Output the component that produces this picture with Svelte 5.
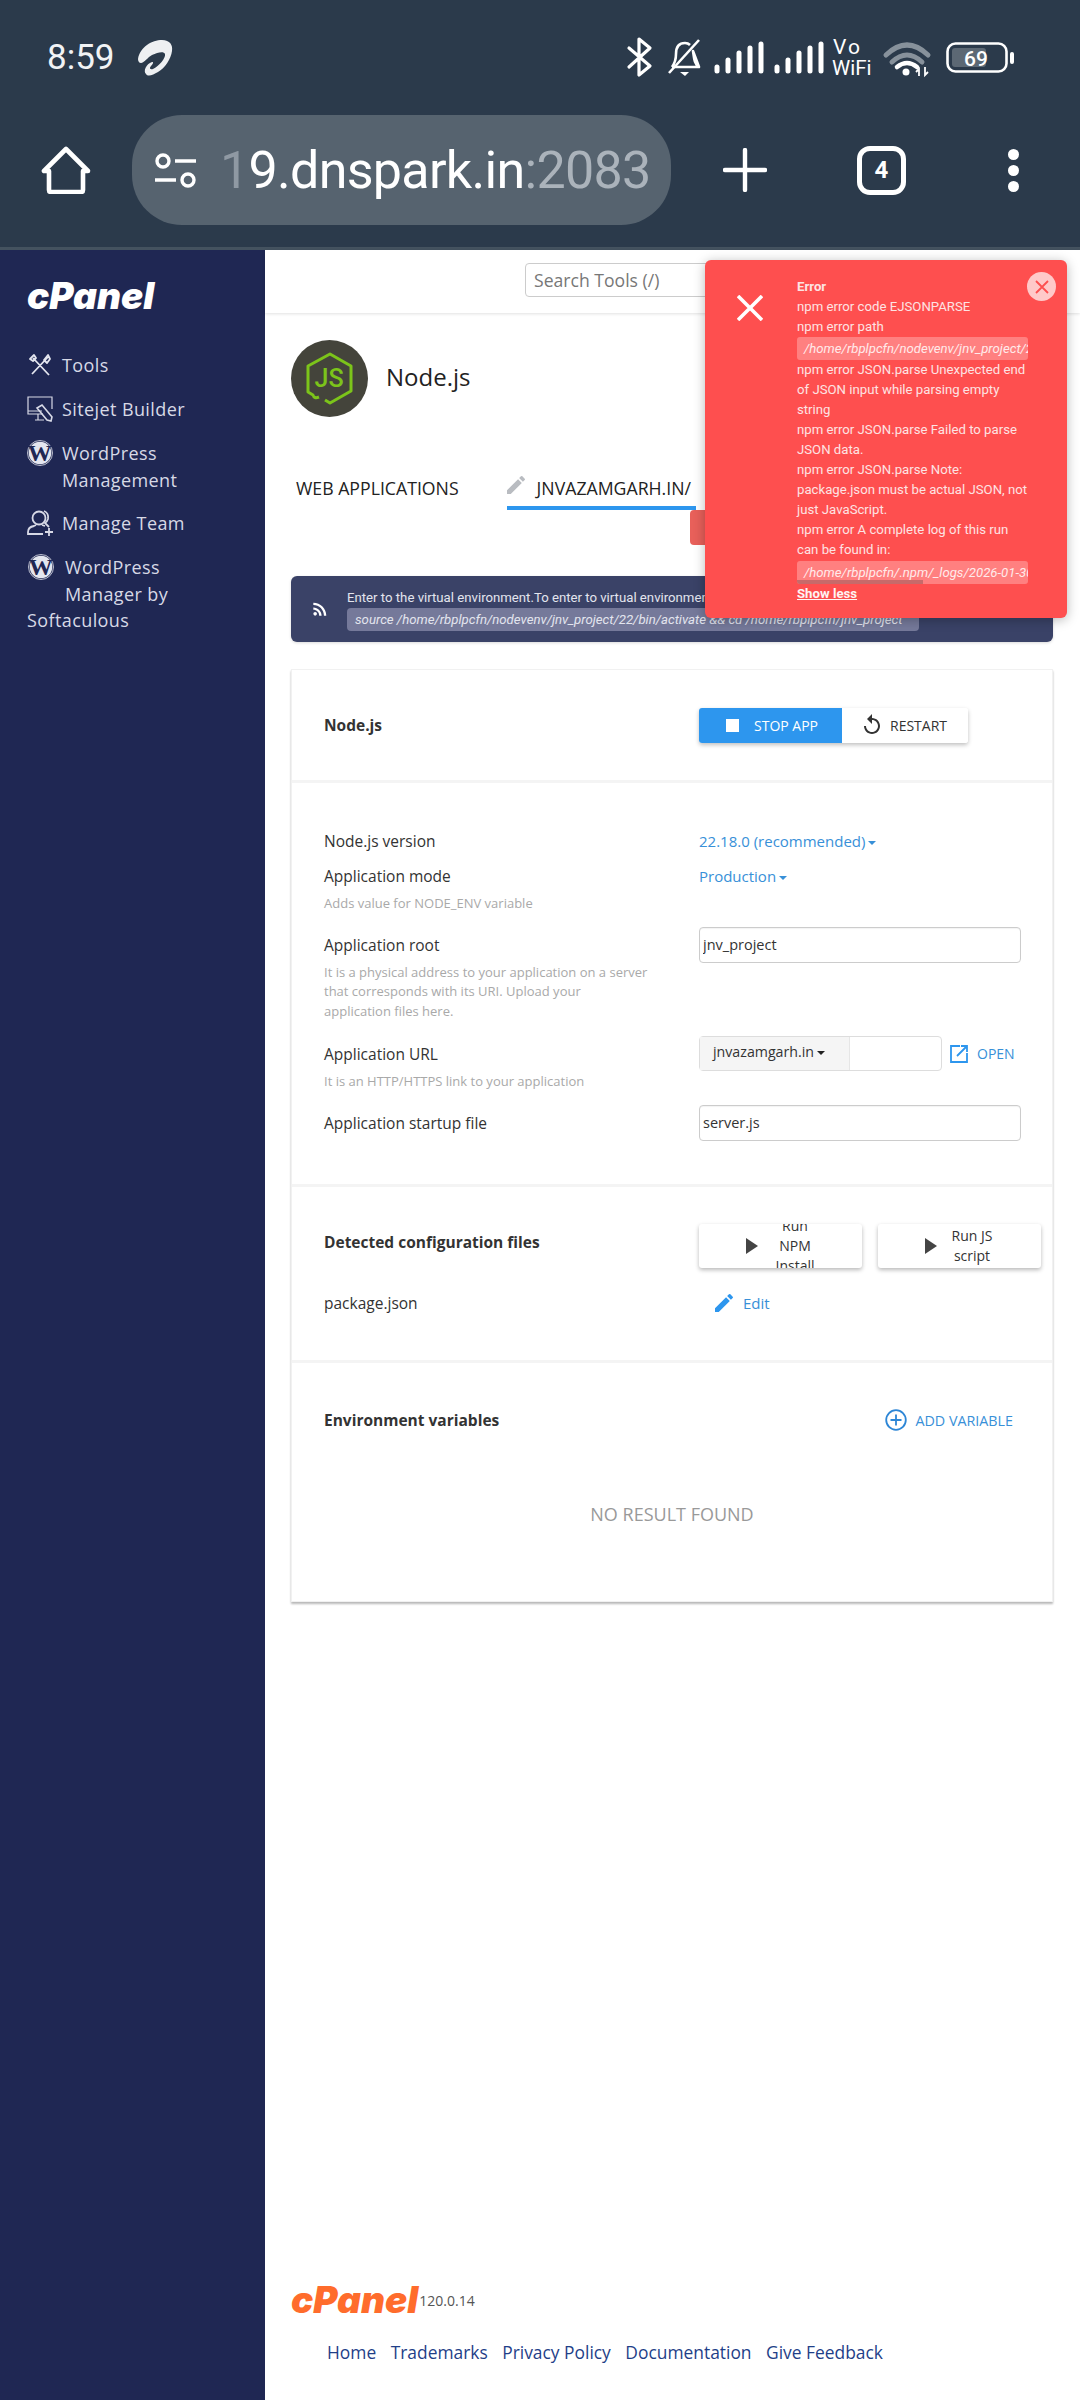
<script>
  const bars = [
    { x: 0, top: 67 },
    { x: 11, top: 60 },
    { x: 22, top: 53 },
    { x: 33, top: 48 },
    { x: 44, top: 44 }
  ]
  const signalStarts = [717, 777]
  const tabs = ['WEB APPLICATIONS']
  const footerLinks = ['Home', 'Trademarks', 'Privacy Policy', 'Documentation', 'Give Feedback']
</script>

<div class="page">
  <header class="chrome">
    <div class="status">
      <span class="time">8:59</span>
      <svg class="airtel" viewBox="138 38 38 38" width="38" height="38">
        <path fill="#eef0f2" d="M138 58C140 46 152 39 162 39C170 39 173 44 172 50C171 58 165 67 158 71C153 74 148 76 146 73C143 70 146 63 152 61C154 61 153 63 151 65C149 67 150 69 153 68C159 65 166 57 165 53C164 50 158 51 152 54C148 56 144 62 141 62C139 62 138 60 138 58Z" />
      </svg>
      <svg class="status-icons" viewBox="625 30 390 55" width="390" height="55">
        <path d="M629 48l21 18-11 9V39l11 9-21 19" fill="none" stroke="#fff" stroke-width="3.2" stroke-linejoin="round" stroke-linecap="round" />
        <path d="M672 67c3-4 4-7 4-13 0-7 3-11 9-11 2 0 4 1 5 2m3 6c1 6 1 13 6 16z M672 67h27" fill="none" stroke="#fff" stroke-width="2.6" stroke-linejoin="round" />
        <path d="M680 72h9l-4 4z" fill="#fff" />
        <path d="M699 40l-30 33" stroke="#fff" stroke-width="2.6" />
        {#each signalStarts as sx}
          {#each bars as b}
            <line x1={sx + b.x} x2={sx + b.x} y1={b.top} y2="71" stroke="#fff" stroke-width="5" stroke-linecap="round" />
          {/each}
        {/each}
        <text x="833" y="54" class="vo wide">Vo</text>
        <text x="832" y="75" class="vo">WiFi</text>
        <path d="M886 55q21-20 42 0" fill="none" stroke="#87919b" stroke-width="5" stroke-linecap="round" />
        <path d="M892 62q15-14 30 0" fill="none" stroke="#87919b" stroke-width="5" stroke-linecap="round" />
        <path d="M897 67q10-8 20 0" fill="none" stroke="#fff" stroke-width="4.5" stroke-linecap="round" />
        <circle cx="906" cy="72" r="3.5" fill="#fff" />
        <path d="M919 76v-7l-3 3M925 67v8l3-3" fill="none" stroke="#fff" stroke-width="1.8" />
        <rect x="947.5" y="43.5" width="59" height="28" rx="8" fill="none" stroke="#fff" stroke-width="2.6" />
        <rect x="952" y="48" width="34" height="19" rx="3" fill="#5c6874" />
        <rect x="1010" y="52" width="4" height="12" rx="2" fill="#fff" />
        <text x="976" y="66" class="batt">69</text>
      </svg>
    </div>
    <div class="toolbar">
      <svg class="home" viewBox="41 146 50 48" width="50" height="48">
        <path d="M66 149L44 171h5v19q0 2 2 2h30q2 0 2-2v-19h5z" fill="none" stroke="#fff" stroke-width="4.6" stroke-linejoin="round" />
      </svg>
      <div class="pill">
        <svg class="tune" viewBox="155 153 42 35" width="42" height="35">
          <circle cx="163" cy="161" r="6" fill="none" stroke="#fff" stroke-width="3.4" />
          <path d="M175 161h21M155 180h21" stroke="#fff" stroke-width="3.4" />
          <circle cx="188" cy="180" r="6" fill="none" stroke="#fff" stroke-width="3.4" />
        </svg>
        <span class="url"><span class="fade">1</span>9.dnspark.in<span class="port">:2083</span></span>
      </div>
      <svg class="plus" viewBox="0 0 44 44" width="44" height="44">
        <path d="M2 22h40M22 2v40" stroke="#fff" stroke-width="4.4" stroke-linecap="round" />
      </svg>
      <div class="tabcount">4</div>
      <div class="dots"><i></i><i></i><i></i></div>
    </div>
  </header>

  <div class="body">
    <aside class="side">
      <div class="logo">cPanel</div>
      <nav>
        <a class="item">
          <svg viewBox="0 0 26 26" width="26" height="26">
            <path d="M6 6l16 17M7 3l-4 4 3 2 3-3zM21 5l-16 17M17 8l3 3 3-4-2-4z" fill="none" stroke="#e4e6ef" stroke-width="1.8" stroke-linejoin="round" />
          </svg>Tools
        </a>
        <a class="item">
          <svg viewBox="0 0 26 26" width="26" height="26">
            <path d="M25 13V1H1v17h15M8 24h9M11 18v6" fill="none" stroke="#d7d9e6" stroke-width="1.2" />
            <path d="M1 15h14" stroke="#d7d9e6" stroke-width="1" />
            <path d="M15 9l10 12-1 4-4-1L10 12z" fill="none" stroke="#d7d9e6" stroke-width="1.6" />
          </svg>Sitejet Builder
        </a>
        <a class="item">
          <svg viewBox="0 0 26 26" width="26" height="26">
            <circle cx="13" cy="13" r="12.5" fill="none" stroke="#e4e6ef" stroke-width=".8" />
            <circle cx="13" cy="13" r="11.3" fill="#e4e6ef" />
            <text x="13" y="21" class="wp">W</text>
          </svg>WordPress Management
        </a>
        <a class="item">
          <svg viewBox="0 0 26 26" width="26" height="26">
            <circle cx="12" cy="8" r="6.5" fill="none" stroke="#d7d9e6" stroke-width="1.8" />
            <path d="M1 25v-3q0-5 6-6l2-1M15 15l3 1M16 24H1M17 1q5 2 4 8-1 3-3 4l4 4" fill="none" stroke="#d7d9e6" stroke-width="1.8" />
            <path d="M18 22h8M22 18v8" stroke="#d7d9e6" stroke-width="1.8" />
          </svg>Manage Team
        </a>
        <a class="item last">
          <svg viewBox="0 0 26 26" width="26" height="26">
            <circle cx="13" cy="13" r="12.5" fill="none" stroke="#e4e6ef" stroke-width=".8" />
            <circle cx="13" cy="13" r="11.3" fill="#e4e6ef" />
            <text x="13" y="21" class="wp">W</text>
          </svg>WordPress Manager by Softaculous
        </a>
      </nav>
    </aside>

    <main class="main">
      <div class="topbar">
        <input class="search" placeholder="Search Tools (/)" />
      </div>

      <div class="toast">
        <svg class="toast-x" viewBox="0 0 26 26" width="26" height="26">
          <path d="M1 1l24 24M25 1L1 25" stroke="#fff" stroke-width="3.6" />
        </svg>
        <div class="toast-body">
          <strong>Error</strong>
          <p>npm error code EJSONPARSE</p>
          <p>npm error path</p>
          <code>/home/rbplpcfn/nodevenv/jnv_project/22/package.json</code>
          <p>npm error JSON.parse Unexpected end of JSON input while parsing empty string</p>
          <p>npm error JSON.parse Failed to parse JSON data.</p>
          <p>npm error JSON.parse Note: package.json must be actual JSON, not just JavaScript.</p>
          <p>npm error A complete log of this run can be found in:</p>
          <code class="scrolled">/home/rbplpcfn/.npm/_logs/2026-01-30T10_22_41_debug.log</code>
          <a class="less">Show less</a>
        </div>
        <button class="toast-close" aria-label="close">
          <svg viewBox="0 0 14 14" width="14" height="14">
            <path d="M1 1l12 12M13 1L1 13" stroke="#fe4f4f" stroke-width="1.8" />
          </svg>
        </button>
      </div>

      <div class="content">
        <div class="title">
          <svg viewBox="0 0 77 77" width="77" height="77">
            <circle cx="38.5" cy="38.5" r="38.5" fill="#44443b" />
            <path d="M28 57q-5 2-6-2l-5-3V26l22-12 21 12v25L39 63l-5-3" fill="none" stroke="#7cc41a" stroke-width="3" stroke-linejoin="round" />
            <text x="38" y="47" class="js">JS</text>
          </svg>
          <h1>Node.js</h1>
        </div>

        <div class="tabs">
          {#each tabs as t}
            <div class="tab">{t}</div>
          {/each}
          <div class="tab active">
            <svg viewBox="0 0 24 24" width="24" height="24">
              <path fill="#b9bcc1" d="M3 17.25V21h3.75L17.81 9.94l-3.75-3.75L3 17.25zM20.71 7.04a1 1 0 0 0 0-1.41l-2.34-2.34a1 1 0 0 0-1.41 0l-1.83 1.83 3.75 3.75 1.83-1.83z" />
            </svg>
            JNVAZAMGARH.IN/
          </div>
        </div>
        <div class="tab-actions"><button class="danger"></button></div>

        <div class="banner">
          <svg viewBox="0 0 24 24" width="20" height="20">
            <circle cx="6.18" cy="17.82" r="2.18" fill="#fff" />
            <path fill="#fff" d="M4 4.44v2.83c7.03 0 12.73 5.7 12.73 12.73h2.83c0-8.59-6.97-15.56-15.56-15.56zm0 5.66v2.83c3.9 0 7.07 3.17 7.07 7.07h2.83c0-5.47-4.43-9.9-9.9-9.9z" />
          </svg>
          <div class="banner-text">
            <div class="banner-line">Enter to the virtual environment.To enter to virtual environment, run the command:</div>
            <code>source /home/rbplpcfn/nodevenv/jnv_project/22/bin/activate &amp;&amp; cd /home/rbplpcfn/jnv_project</code>
          </div>
        </div>

        <section class="card">
          <div class="sec sec-app">
            <div class="bold">Node.js</div>
            <div class="btn-group">
              <button class="btn-stop"><i class="stop"></i>STOP APP</button>
              <button class="btn-restart">
                <svg viewBox="0 0 24 24" width="24" height="24">
                  <path fill="#333" d="M12 5V1L7 6l5 5V7c3.31 0 6 2.69 6 6s-2.69 6-6 6-6-2.69-6-6H4c0 4.42 3.58 8 8 8s8-3.58 8-8-3.58-8-8-8z" />
                </svg>RESTART
              </button>
            </div>
          </div>

          <div class="sec sec-form">
            <div class="row first">
              <div class="label">Node.js version</div>
              <div class="value"><a class="link">22.18.0 (recommended)<i class="caret"></i></a></div>
            </div>
            <div class="row">
              <div>
                <div class="label">Application mode</div>
                <div class="help">Adds value for NODE_ENV variable</div>
              </div>
              <div class="value"><a class="link">Production<i class="caret"></i></a></div>
            </div>
            <div class="row root">
              <div>
                <div class="label inset">Application root</div>
                <div class="help">It is a physical address to your application on a server<br />that corresponds with its URI. Upload your<br />application files here.</div>
              </div>
              <div><input class="field" value="jnv_project" /></div>
            </div>
            <div class="row">
              <div>
                <div class="label inset">Application URL</div>
                <div class="help">It is an HTTP/HTTPS link to your application</div>
              </div>
              <div class="url-row">
                <div class="url-group">
                  <span class="prefix">jnvazamgarh.in<i class="caret dark"></i></span>
                  <input class="suffix" />
                </div>
                <a class="open">
                  <svg viewBox="0 0 18 18" width="18" height="18">
                    <path d="M10 1H1v16h16V8" fill="none" stroke="#2d96ee" stroke-width="1.8" />
                    <path d="M11 1h6v6M17 1L7 11" fill="none" stroke="#2d96ee" stroke-width="1.8" />
                  </svg>OPEN
                </a>
              </div>
            </div>
            <div class="row">
              <div class="label inset">Application startup file</div>
              <div><input class="field" value="server.js" /></div>
            </div>
          </div>

          <div class="sec sec-config">
            <div class="row-config">
              <div class="bold">Detected configuration files</div>
              <div class="run-btns">
                <button class="run first-run"><i class="play"></i><span>Run<br />NPM<br />Install</span></button>
                <button class="run"><i class="play"></i><span>Run JS<br />script</span></button>
              </div>
            </div>
            <div class="row-file">
              <div class="label">package.json</div>
              <a class="edit">
                <svg viewBox="0 0 24 24" width="24" height="24">
                  <path fill="#2d96ee" d="M3 17.25V21h3.75L17.81 9.94l-3.75-3.75L3 17.25zM20.71 7.04a1 1 0 0 0 0-1.41l-2.34-2.34a1 1 0 0 0-1.41 0l-1.83 1.83 3.75 3.75 1.83-1.83z" />
                </svg>Edit
              </a>
            </div>
          </div>

          <div class="sec sec-env">
            <div class="env-head">
              <div class="bold">Environment variables</div>
              <a class="add">
                <svg viewBox="0 0 22 22" width="22" height="22">
                  <circle cx="11" cy="11" r="9.8" fill="none" stroke="#2d86d6" stroke-width="1.8" />
                  <path d="M11 5.5v11M5.5 11h11" stroke="#2d86d6" stroke-width="1.8" />
                </svg>ADD VARIABLE
              </a>
            </div>
            <div class="empty">NO RESULT FOUND</div>
          </div>
        </section>

        <footer class="foot">
          <div class="foot-brand"><span class="logo orange">cPanel</span><span class="version">120.0.14</span></div>
          <div class="foot-links">
            {#each footerLinks as l}
              <a>{l}</a>
            {/each}
          </div>
        </footer>
      </div>
    </main>
  </div>
</div>

<style>
  :global(body) {
    margin: 0;
    background: #fff;
  }
  .page {
    width: 1080px;
    height: 2400px;
    display: flex;
    flex-direction: column;
    overflow: hidden;
    font-family: "Open Sans", sans-serif;
    color: #333;
  }
  button {
    font-family: inherit;
    border: 0;
    padding: 0;
  }
  i {
    display: block;
  }

  /* browser chrome */
  .chrome {
    height: 250px;
    box-sizing: border-box;
    background: #2b3a4b;
    border-bottom: 3px solid #44525f;
    flex: none;
    font-family: Roboto, sans-serif;
    color: #fff;
  }
  .status {
    height: 115px;
    display: flex;
    align-items: center;
    padding-left: 47px;
    padding-right: 65px;
  }
  .time {
    font-size: 35px;
    width: 91px;
    color: #f1f3f5;
  }
  .status-icons {
    margin-left: auto;
  }
  .vo {
    font: 20.5px Roboto, sans-serif;
    fill: #fff;
  }
  .vo.wide {
    font-size: 21px;
    letter-spacing: 2px;
  }
  .batt {
    font: 500 21px Roboto, sans-serif;
    fill: #fff;
    text-anchor: middle;
  }
  .toolbar {
    display: flex;
    align-items: center;
    height: 110px;
    padding-left: 41px;
  }
  .pill {
    margin-left: 41px;
    width: 539px;
    height: 110px;
    box-sizing: border-box;
    padding-left: 23px;
    border-radius: 50px;
    background: #56636f;
    display: flex;
    align-items: center;
  }
  .url {
    margin-left: 23px;
    font-size: 52px;
    letter-spacing: -0.7px;
    white-space: nowrap;
  }
  .fade {
    color: #8f99a3;
  }
  .port {
    color: #abb3bb;
  }
  .plus {
    margin-left: 52px;
  }
  .tabcount {
    margin-left: 90px;
    width: 49px;
    height: 49px;
    box-sizing: border-box;
    border: 5px solid #fff;
    border-radius: 13px;
    display: flex;
    align-items: center;
    justify-content: center;
    font-size: 24px;
    font-weight: 700;
  }
  .dots {
    margin-left: 102px;
    display: flex;
    flex-direction: column;
    gap: 5px;
  }
  .dots i {
    width: 11px;
    height: 11px;
    border-radius: 50%;
    background: #fff;
  }

  /* sidebar */
  .body {
    flex: 1;
    display: flex;
    min-height: 0;
    position: relative;
  }
  .side {
    width: 265px;
    flex: none;
    background: #1f2753;
    box-sizing: border-box;
    padding: 28px 40px 0 27px;
    color: #d7d9e6;
  }
  .logo {
    font-family: Inter, sans-serif;
    font-weight: 900;
    font-style: italic;
    font-size: 37px;
    line-height: 36px;
    letter-spacing: 0;
    color: #fff;
  }
  nav {
    margin-top: 38px;
  }
  .item {
    display: flow-root;
    font-size: 18px;
    line-height: 26.5px;
    letter-spacing: 0.4px;
    margin-bottom: 17px;
  }
  .item svg {
    float: left;
    margin-right: 9px;
    margin-bottom: 1px;
  }
  .item.last svg {
    margin-left: 1px;
    margin-right: 11px;
  }
  .wp {
    font: 700 24px "Liberation Serif", serif;
    fill: #1f2753;
    text-anchor: middle;
  }

  /* main column */
  .main {
    flex: 1;
    min-width: 0;
    display: flex;
    flex-direction: column;
    position: relative;
  }
  .topbar {
    height: 63px;
    flex: none;
    box-sizing: border-box;
    padding: 13px 0 0 260px;
    box-shadow: 0 1px 3px rgba(0, 0, 0, 0.12);
  }
  .search {
    width: 300px;
    height: 34px;
    box-sizing: border-box;
    border: 1px solid #ccc;
    border-radius: 4px;
    padding: 0 8px;
    font: 17.6px "Open Sans", sans-serif;
  }
  .search::placeholder {
    color: #777;
    opacity: 1;
  }

  /* error toast floats over the page */
  .toast {
    position: absolute;
    left: 440px;
    top: 10px;
    width: 362px;
    height: 358px;
    background: #fe4f4f;
    border-radius: 6px;
    box-shadow: 0 2px 12px rgba(0, 0, 0, 0.28);
    font-family: Roboto, sans-serif;
    font-size: 13.2px;
    line-height: 20px;
    color: #fde3e3;
    z-index: 2;
  }
  .toast-x {
    position: absolute;
    left: 32px;
    top: 35px;
  }
  .toast-body {
    position: absolute;
    left: 92px;
    top: 17px;
    width: 231px;
  }
  .toast-body strong {
    display: block;
    font-weight: 700;
    font-size: 13.2px;
  }
  .toast-body p {
    margin: 0;
  }
  .toast-body code {
    display: block;
    position: relative;
    height: 23px;
    padding-left: 7px;
    border-radius: 3px;
    background: #ff8080;
    color: #ffeaea;
    font: italic 13.2px/23px Roboto, sans-serif;
    white-space: nowrap;
    overflow: hidden;
  }
  .toast-body code.scrolled {
    margin-top: 1px;
  }
  .toast-body code.scrolled::after {
    content: "";
    position: absolute;
    left: 0;
    bottom: 0;
    width: 126px;
    height: 4px;
    background: #c76a6a;
  }
  .less {
    display: inline-block;
    font-weight: 700;
    font-size: 13.2px;
    line-height: 19px;
    color: #fff3f3;
    text-decoration: underline;
  }
  .toast-close {
    position: absolute;
    right: 11px;
    top: 12px;
    width: 29px;
    height: 29px;
    border-radius: 50%;
    background: #ffc9c9;
    display: flex;
    align-items: center;
    justify-content: center;
  }

  /* content */
  .content {
    flex: 1;
    display: flex;
    flex-direction: column;
    padding: 27px 27px 0 26px;
    min-height: 0;
  }
  .title {
    display: flex;
    align-items: center;
    gap: 18px;
  }
  .js {
    font: 500 25px Roboto, sans-serif;
    fill: #7cc41a;
    text-anchor: middle;
  }
  h1 {
    margin: 0;
    font-size: 24px;
    font-weight: 400;
    color: #222;
    position: relative;
    top: -2px;
  }
  .tabs {
    display: flex;
    margin-top: 54px;
    padding-left: 5px;
  }
  .tab {
    height: 35px;
    line-height: 35px;
    font-size: 17.7px;
    color: #222;
    margin-right: 48px;
    white-space: nowrap;
  }
  .tab.active {
    display: flex;
    align-items: center;
    gap: 9px;
    width: 189px;
    margin-right: 0;
    border-bottom: 4px solid #2d96ee;
  }
  .tab.active svg {
    margin-left: -3px;
    margin-top: -8px;
  }
  .tab-actions {
    padding-left: 399px;
  }
  .danger {
    display: block;
    width: 60px;
    height: 35px;
    border-radius: 4px;
    background: #e8605a;
  }
  .banner {
    margin-top: 31px;
    height: 66px;
    flex: none;
    display: flex;
    align-items: center;
    background: #3a4267;
    border-radius: 6px;
    box-sizing: border-box;
    padding-left: 19px;
    box-shadow: 0 1px 3px rgba(0, 0, 0, 0.15);
    font-family: Roboto, sans-serif;
    font-size: 13.2px;
    color: #e3e5ee;
    overflow: hidden;
  }
  .banner-text {
    margin-left: 17px;
    min-width: 0;
  }
  .banner-line {
    line-height: 20px;
    white-space: nowrap;
  }
  .banner-text code {
    display: block;
    width: 572px;
    box-sizing: border-box;
    height: 23px;
    padding-left: 8px;
    border-radius: 4px;
    background: #75799a;
    font: italic 13.2px/23px Roboto, sans-serif;
    white-space: nowrap;
    overflow: hidden;
  }

  /* card */
  .card {
    margin-top: 27px;
    height: 933px;
    flex: none;
    border: 1px solid #f1f1f1;
    box-shadow: 0 2px 2px rgba(0, 0, 0, 0.28);
    display: flex;
    flex-direction: column;
    box-sizing: border-box;
  }
  .sec {
    padding-left: 32px;
    box-sizing: border-box;
    border-bottom: 3px solid #f4f4f4;
  }
  .sec:last-child {
    border-bottom: 0;
    flex: 1;
  }
  .bold {
    font-size: 15.5px;
    font-weight: 700;
    line-height: 24px;
    color: #333;
  }
  .sec-app {
    height: 113px;
    display: grid;
    grid-template-columns: 375px 1fr;
    align-items: center;
  }
  .btn-group {
    display: inline-flex;
    justify-self: start;
    height: 35px;
    border-radius: 3px;
    box-shadow: 0 2px 4px rgba(0, 0, 0, 0.25);
  }
  .btn-group button {
    height: 35px;
    display: flex;
    align-items: center;
    font-size: 14px;
  }
  .btn-stop {
    width: 143px;
    background: #2d96ee;
    color: #fff;
    padding-left: 27px;
    border-radius: 3px 0 0 3px;
  }
  .stop {
    width: 13px;
    height: 13px;
    background: #fff;
    margin-right: 15px;
  }
  .btn-restart {
    width: 126px;
    background: #fff;
    color: #333;
    padding-left: 18px;
    border-radius: 0 3px 3px 0;
  }
  .btn-restart svg {
    margin-right: 6px;
  }
  .sec-form {
    height: 404px;
    padding-top: 46px;
  }
  .row {
    display: grid;
    grid-template-columns: 375px 1fr;
    margin-bottom: 13px;
  }
  .row.first {
    margin-bottom: 11px;
  }
  .row.root {
    margin-bottom: 15px;
  }
  .label {
    font-size: 15.5px;
    line-height: 24px;
    color: #333;
  }
  .label.inset {
    padding-top: 6px;
  }
  .help {
    margin-top: 6px;
    font-size: 13px;
    line-height: 19.5px;
    color: #a9a9a9;
    white-space: nowrap;
  }
  .link {
    font-size: 15px;
    line-height: 24px;
    color: #3890d8;
  }
  .caret {
    display: inline-block;
    margin-left: 3px;
    vertical-align: 2px;
    border: 4px solid transparent;
    border-top-color: #3890d8;
    border-bottom: 0;
  }
  .caret.dark {
    border-top-color: #222;
  }
  .field {
    display: block;
    width: 322px;
    height: 36px;
    box-sizing: border-box;
    border: 1px solid #ccc;
    border-radius: 4px;
    padding: 0 3px;
    font: 14.5px "Open Sans", sans-serif;
    color: #333;
    box-shadow: inset 0 1px 1px rgba(0, 0, 0, 0.05);
  }
  .url-row {
    display: flex;
    align-items: center;
    height: 35px;
  }
  .url-group {
    display: flex;
    width: 243px;
    height: 35px;
    box-sizing: border-box;
    border: 1px solid #ddd;
    border-radius: 4px;
  }
  .prefix {
    width: 150px;
    box-sizing: border-box;
    padding-left: 13px;
    background: #f5f5f5;
    border-right: 1px solid #e6e6e6;
    font-size: 14.2px;
    line-height: 30px;
    color: #333;
    white-space: nowrap;
  }
  .suffix {
    flex: 1;
    min-width: 0;
    border: 0;
    background: transparent;
  }
  .open {
    display: flex;
    align-items: center;
    gap: 9px;
    margin-left: 8px;
    font-size: 14px;
    color: #3890d8;
  }
  .sec-config {
    height: 176px;
    padding-top: 37px;
  }
  .row-config {
    display: grid;
    grid-template-columns: 375px 1fr;
    align-items: center;
  }
  .row-config .bold {
    margin-bottom: 8px;
  }
  .run-btns {
    display: flex;
    gap: 16px;
  }
  .run {
    width: 163px;
    height: 44px;
    overflow: hidden;
    background: #fff;
    border-radius: 3px;
    box-shadow: 0 2px 4px rgba(0, 0, 0, 0.28);
    display: flex;
    align-items: center;
    font-size: 14px;
    line-height: 20px;
    color: #333;
    padding-left: 47px;
  }
  .run span {
    flex: 1;
    text-align: center;
    padding-right: 34px;
  }
  .run.first-run span {
    padding-right: 30px;
  }
  .play {
    border-left: 12px solid #444;
    border-top: 8px solid transparent;
    border-bottom: 8px solid transparent;
  }
  .row-file {
    display: grid;
    grid-template-columns: 375px 1fr;
    margin-top: 23px;
  }
  .edit {
    display: flex;
    align-items: center;
    gap: 7px;
    padding-left: 13px;
    font-size: 15px;
    color: #3890d8;
  }
  .env-head {
    display: flex;
    align-items: center;
    justify-content: space-between;
    padding: 45px 39px 0 0;
  }
  .add {
    display: flex;
    align-items: center;
    gap: 8px;
    font-size: 14.3px;
    color: #3890d8;
  }
  .empty {
    margin-top: 70px;
    margin-left: -32px;
    text-align: center;
    font-size: 18px;
    line-height: 24px;
    color: #999;
  }

  /* footer */
  .foot {
    margin-top: auto;
    padding-bottom: 35px;
  }
  .foot-brand {
    display: flex;
    align-items: center;
  }
  .logo.orange {
    color: #ff6c2c;
    font-size: 37px;
    line-height: 30px;
  }
  .version {
    font-size: 14px;
    color: #555;
    margin-left: 1px;
  }
  .foot-links {
    display: flex;
    gap: 14.5px;
    margin-top: 24px;
    padding-left: 36px;
    font-size: 17.4px;
    line-height: 26px;
    color: #1f3f88;
  }
</style>
